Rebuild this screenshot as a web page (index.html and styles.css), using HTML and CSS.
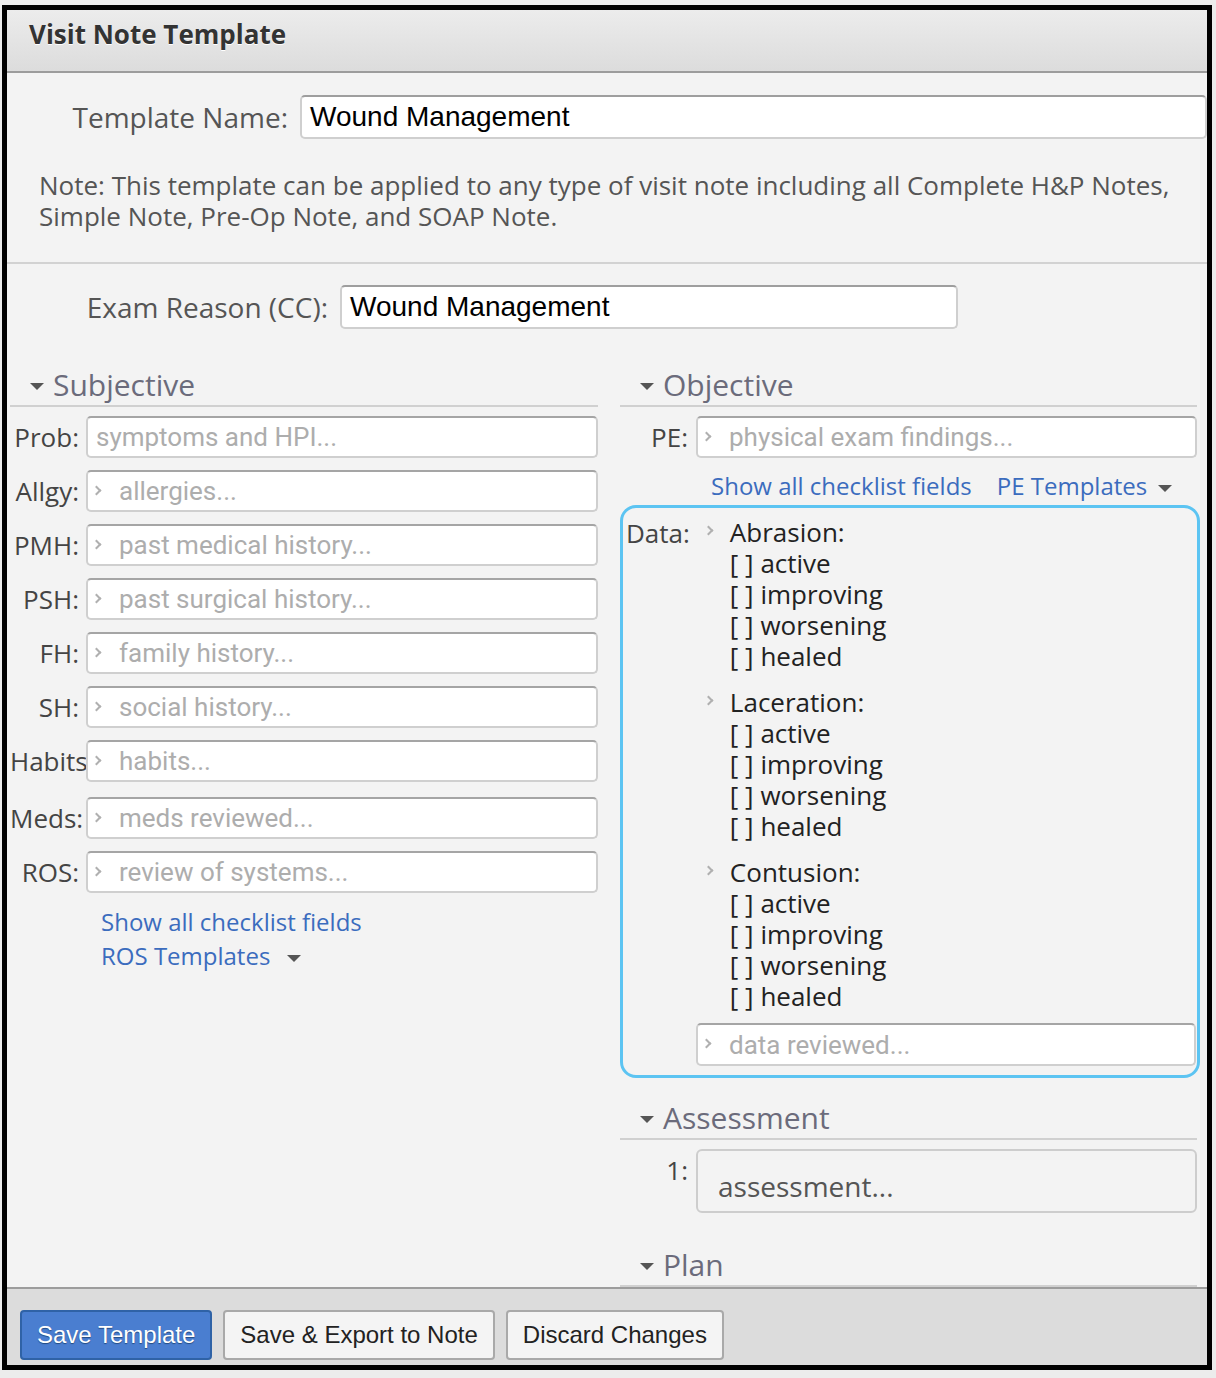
FILE: index.html
```html
<!DOCTYPE html>
<html lang="en">
<head>
    <meta charset="UTF-8">
    <title>Visit Note Template</title>
    <link rel="stylesheet" href="styles.css">
</head>
<body>
    <div class="window">
        <header class="win-head">
            <h1>Visit Note Template</h1>
        </header>

        <main class="win-body">
            <div class="name-row">
                <label class="name-label">Template Name:</label>
                <div class="text-input name-input">Wound Management</div>
            </div>

            <p class="note">Note: This template can be applied to any type of visit note including all Complete H&amp;P Notes, Simple Note, Pre-Op Note, and SOAP Note.</p>

            <div class="reason-row">
                <label class="reason-label">Exam Reason (CC):</label>
                <div class="text-input reason-input">Wound Management</div>
            </div>

            <div class="soap">
                <!-- 主观 -->
                <section class="col col-left">
                    <h2 class="sec"><span class="caret"></span>Subjective</h2>
                    <div class="row"><span class="lbl">Prob:</span><div class="field"><span class="ph">symptoms and HPI...</span></div></div>
                    <div class="row"><span class="lbl">Allgy:</span><div class="field more"><span class="ph">allergies...</span></div></div>
                    <div class="row"><span class="lbl">PMH:</span><div class="field more"><span class="ph">past medical history...</span></div></div>
                    <div class="row"><span class="lbl">PSH:</span><div class="field more"><span class="ph">past surgical history...</span></div></div>
                    <div class="row"><span class="lbl">FH:</span><div class="field more"><span class="ph">family history...</span></div></div>
                    <div class="row"><span class="lbl">SH:</span><div class="field more"><span class="ph">social history...</span></div></div>
                    <div class="row row-tall"><span class="lbl">Habits</span><div class="field more"><span class="ph">habits...</span></div></div>
                    <div class="row"><span class="lbl">Meds:</span><div class="field more"><span class="ph">meds reviewed...</span></div></div>
                    <div class="row"><span class="lbl">ROS:</span><div class="field more"><span class="ph">review of systems...</span></div></div>
                    <div class="links links-stack">
                        <a href="#">Show all checklist fields</a>
                        <a href="#" class="drop">ROS Templates</a>
                    </div>
                </section>

                <!-- 客观 / 评估 / 计划 -->
                <section class="col col-right">
                    <h2 class="sec"><span class="caret"></span>Objective</h2>
                    <div class="row"><span class="lbl">PE:</span><div class="field more"><span class="ph">physical exam findings...</span></div></div>
                    <div class="links links-inline">
                        <a href="#">Show all checklist fields</a>
                        <a href="#" class="drop">PE Templates</a>
                    </div>

                    <div class="data-box">
                        <div class="data-top">
                            <span class="data-lbl">Data:</span>
                            <div class="data-list">
                                <div class="grp">
                                    <span class="grp-chev"></span>
                                    <div class="grp-lines">
                                        <div>Abrasion:</div>
                                        <div>[ ] active</div>
                                        <div>[ ] improving</div>
                                        <div>[ ] worsening</div>
                                        <div>[ ] healed</div>
                                    </div>
                                </div>
                                <div class="grp">
                                    <span class="grp-chev"></span>
                                    <div class="grp-lines">
                                        <div>Laceration:</div>
                                        <div>[ ] active</div>
                                        <div>[ ] improving</div>
                                        <div>[ ] worsening</div>
                                        <div>[ ] healed</div>
                                    </div>
                                </div>
                                <div class="grp">
                                    <span class="grp-chev"></span>
                                    <div class="grp-lines">
                                        <div>Contusion:</div>
                                        <div>[ ] active</div>
                                        <div>[ ] improving</div>
                                        <div>[ ] worsening</div>
                                        <div>[ ] healed</div>
                                    </div>
                                </div>
                            </div>
                        </div>
                        <div class="data-bottom">
                            <div class="field more"><span class="ph">data reviewed...</span></div>
                        </div>
                    </div>

                    <h2 class="sec sec-assess"><span class="caret"></span>Assessment</h2>
                    <div class="assess-row">
                        <span class="lbl">1:</span>
                        <div class="assess-box">assessment...</div>
                    </div>

                    <h2 class="sec sec-plan"><span class="caret"></span>Plan</h2>
                </section>
            </div>
        </main>

        <footer class="win-foot">
            <button class="btn btn-primary">Save Template</button>
            <button class="btn">Save &amp; Export to Note</button>
            <button class="btn">Discard Changes</button>
        </footer>
    </div>
</body>
</html>
```

FILE: styles.css
```css
* {
    margin: 0;
    padding: 0;
    box-sizing: border-box;
}

body {
    background: #ececec;
    font-family: 'Open Sans', 'Noto Sans', sans-serif;
    color: #444;
}

/* 窗口外框 */
.window {
    width: 1210px;
    height: 1365px;
    margin: 5px 0 0 2px;
    border: 5px solid #000;
    background: #f3f3f3;
    display: flex;
    flex-direction: column;
}

.win-head {
    height: 63px;
    flex: 0 0 63px;
    background: linear-gradient(#ececec, #dcdcdc);
    border-bottom: 2px solid #9c9c9c;
    padding: 0 0 14px 22px;
    display: flex;
    align-items: center;
}

.win-head h1 {
    font-size: 26px;
    font-weight: 700;
    color: #333;
    text-shadow: 0 1px 0 #fff;
}

.win-body {
    flex: 1;
    overflow: hidden;
}

/* 模板名称 */
.name-row,
.reason-row {
    display: flex;
    align-items: center;
}

.name-row {
    margin-top: 22px;
}

.name-label,
.reason-label {
    font-size: 28px;
    color: #555;
    text-align: right;
    white-space: nowrap;
}

.name-label {
    flex: 0 0 281px;
    margin-right: 12px;
}

.text-input {
    height: 44px;
    background: #fff;
    border: 2px solid #cfcfcf;
    border-top-color: #9e9e9e;
    border-radius: 5px;
    padding-left: 8px;
    font-family: 'Liberation Sans', Arial, sans-serif;
    font-size: 28px;
    line-height: 40px;
    color: #000;
}

.name-input {
    flex: 1;
}

.note {
    font-size: 26px;
    line-height: 31px;
    color: #555;
    margin-top: 31px;
    padding: 0 30px 30px 32px;
    border-bottom: 2px solid #d2d2d2;
}

.reason-row {
    margin-top: 21px;
}

.reason-label {
    flex: 0 0 321px;
    margin-right: 12px;
}

.reason-input {
    width: 618px;
}

/* 两栏 */
.soap {
    display: flex;
    gap: 22px;
    margin-top: 36px;
    padding-left: 3px;
}

.col-left {
    width: 588px;
}

.col-right {
    width: 577px;
}

.sec {
    font-size: 30px;
    font-weight: 400;
    line-height: 40px;
    color: #6b6b7b;
    padding-left: 20px;
    border-bottom: 2px solid #d0d0d0;
    margin-bottom: 9px;
    display: flex;
    align-items: center;
}

.caret {
    width: 0;
    height: 0;
    border-left: 7px solid transparent;
    border-right: 7px solid transparent;
    border-top: 7px solid #555;
    margin: 3px 9px 0 0;
}

.row {
    display: flex;
    align-items: center;
    margin-bottom: 12px;
}

.row-tall {
    margin-bottom: 15px;
}

.lbl {
    flex: 0 0 69px;
    min-width: 0;
    margin-right: 7px;
    font-size: 26px;
    color: #444;
    text-align: right;
    white-space: nowrap;
}

.col-right .lbl {
    flex-basis: 68px;
    margin-right: 8px;
}

.field {
    flex: 1;
    height: 42px;
    background: #fff;
    border: 2px solid #cfcfcf;
    border-top-color: #a5a5a5;
    border-radius: 5px;
    padding-left: 8px;
    display: flex;
    align-items: center;
}

.field.more {
    padding-left: 5px;
}

.field.more::before {
    content: "";
    flex: 0 0 5px;
    height: 5px;
    border-top: 2px solid #b0b0b0;
    border-right: 2px solid #b0b0b0;
    transform: rotate(45deg);
    margin: 0 19px 2px 0;
}

.ph {
    font-family: Roboto, 'Noto Sans', sans-serif;
    font-size: 26px;
    color: #adadad;
    white-space: nowrap;
}

/* 链接 */
.links a {
    font-size: 24px;
    line-height: 34px;
    color: #3b6cbe;
    text-decoration: none;
}

.links .drop::after {
    content: "";
    display: inline-block;
    border-left: 7px solid transparent;
    border-right: 7px solid transparent;
    border-top: 7px solid #555;
    vertical-align: middle;
    margin-left: 17px;
}

.links-stack {
    margin-top: 11px;
    padding-left: 91px;
    display: flex;
    flex-direction: column;
    align-items: flex-start;
}

.links-inline {
    margin-top: -1px;
    padding-left: 91px;
    display: flex;
    gap: 25px;
}

.links-inline .drop::after {
    margin-left: 11px;
}

/* 数据框 */
.data-box {
    margin: 2px -3px 0 0;
    border: 3px solid #5cc4f2;
    border-radius: 16px;
    padding: 9px 1px 9px 3px;
}

.data-top {
    display: flex;
    align-items: flex-start;
}

.data-lbl {
    flex: 0 0 62px;
    margin-right: 8px;
    font-size: 26px;
    line-height: 33px;
    color: #444;
}

.grp {
    display: flex;
    margin-bottom: 15px;
}

.grp-chev {
    flex: 0 0 32px;
    height: 31px;
    display: flex;
    align-items: center;
    padding-left: 7px;
}

.grp-chev::before {
    content: "";
    width: 5px;
    height: 5px;
    border-top: 2px solid #b0b0b0;
    border-right: 2px solid #b0b0b0;
    transform: rotate(45deg);
    margin-bottom: 4px;
}

.grp-lines div {
    font-size: 26px;
    line-height: 31px;
    color: #222;
}

.data-bottom {
    padding-left: 70px;
    margin-top: -4px;
}

.data-bottom .field {
    height: 43px;
}

/* 评估 */
.sec-assess {
    margin-top: 20px;
}

.assess-row {
    display: flex;
    align-items: flex-start;
}

.assess-row .lbl {
    line-height: 31px;
    padding-top: 6px;
}

.assess-box {
    flex: 1;
    height: 64px;
    border: 2px solid #cdcdcd;
    border-radius: 6px;
    padding: 14px 0 0 20px;
    font-size: 28px;
    line-height: 42px;
    color: #555;
}

.sec-plan {
    margin-top: 32px;
}

/* 底部按钮 */
.win-foot {
    flex: 0 0 78px;
    background: #dcdcdc;
    border-top: 2px solid #9c9c9c;
    padding: 21px 0 0 13px;
    display: flex;
    align-items: flex-start;
    gap: 11px;
}

.btn {
    height: 50px;
    padding: 0 15px;
    font-family: 'Liberation Sans', Arial, sans-serif;
    font-size: 24px;
    color: #222;
    background: #f4f4f4;
    border: 2px solid #a9a9a9;
    border-radius: 4px;
}

.btn-primary {
    background: #4a7ed0;
    border-color: #2f62a6;
    color: #fff;
    text-shadow: 0 1px 1px #234a80;
}
```
